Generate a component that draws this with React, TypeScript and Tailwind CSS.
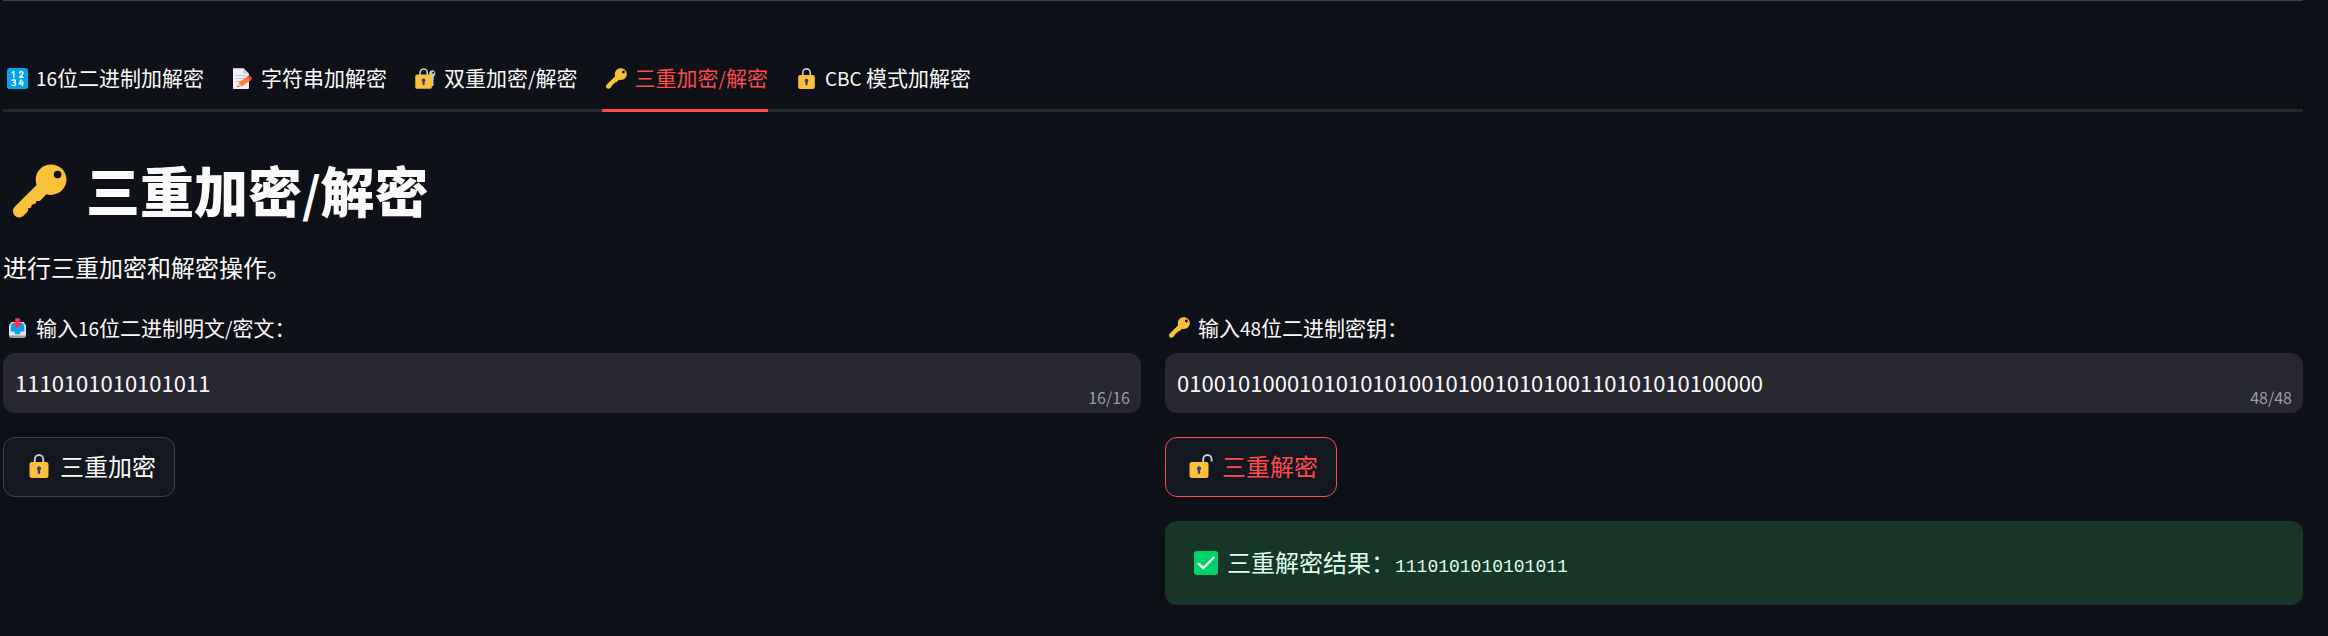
import type { ReactNode } from "react";

type IconProps = { className?: string };

function KeyIcon({ className }: IconProps) {
  return (
    <svg viewBox="0 0 54 54" className={className} aria-hidden="true">
      <path
        fill="#fac23c"
        d="M38 0.5c-8.6 0-15.3 6.800-15.300 15.300 0 1.900.3 3.700.9 5.300L2 42.500c-2.600 2.600-2.700 6.600-.4 9.100 2.400 2.500 6.400 2.500 8.900.1l3.700-3.700c1-1 1.100-2.300.7-3.500l2.100-.6c.8-.2 1.400-.8 1.500-1.600l.3-1.600 2.600-.6c1-.2 1.600-.9 1.800-1.800l.2-1.400h3.500l6.400-6.700c1.500.5 3.100.7 4.700.7 8.600 0 15.500-6.800 15.500-15.300S46.600.5 38 .5Zm6.600 6.200a3.800 3.800 0 1 1 0 7.600 3.800 3.800 0 0 1 0-7.600Z"
      />
    </svg>
  );
}

function LockIcon({ className }: IconProps) {
  return (
    <svg viewBox="0 0 24 24" className={className} aria-hidden="true">
      <path d="M7.800 9V5.200a4.200 4.200 0 0 1 8.400 0V9" fill="none" stroke="#c9c9cd" strokeWidth="1.900" />
      <rect x="2.500" y="8" width="19" height="16" rx="2.200" fill="#fac23c" />
      <path fill="#433b6b" d="M12 12.200a2.200 2.200 0 0 0-1.200 4v2.500a1.200 1.200 0 0 0 2.400 0v-2.500a2.200 2.200 0 0 0-1.200-4Z" />
    </svg>
  );
}

function OpenLockIcon({ className }: IconProps) {
  return (
    <svg viewBox="0 0 24 24" className={className} aria-hidden="true">
      <path d="M14.200 9V5.200a4 4 0 0 1 8.400 0v2.300" fill="none" stroke="#d0d0d4" strokeWidth="1.900" />
      <rect x="0.500" y="8" width="19" height="16" rx="2.200" fill="#fac23c" />
      <path fill="#433b6b" d="M10 12.200a2.200 2.200 0 0 0-1.200 4v2.500a1.200 1.200 0 0 0 2.400 0v-2.500a2.200 2.200 0 0 0-1.200-4Z" />
    </svg>
  );
}

function LockKeyIcon({ className }: IconProps) {
  return (
    <svg viewBox="0 0 24 24" className={className} aria-hidden="true">
      <path d="M5.800 9V5.200a4.100 4.100 0 0 1 8.200 0V9" fill="none" stroke="#c9c9cd" strokeWidth="1.900" />
      <path
        fill="#c4c4ca"
        fillRule="evenodd"
        d="M20 2.400a4.200 4.200 0 0 0-2 7.700v9.500l1.700 1.600 2-2-1.100-1.400 1.100-1.500-1.100-1.300.8-1.400V10A4.200 4.200 0 0 0 20 2.400Zm.8 1.800a1.100 1.100 0 1 1 0 2.300 1.100 1.100 0 0 1 0-2.300Z"
      />
      <rect x="0.300" y="7.500" width="19" height="16.300" rx="2.200" fill="#fac23c" />
      <path fill="#433b6b" d="M9.800 12a2.200 2.200 0 0 0-1.200 4v2.500a1.200 1.200 0 0 0 2.400 0V16a2.200 2.200 0 0 0-1.200-4Z" />
    </svg>
  );
}

function NumbersIcon({ className }: IconProps) {
  return (
    <svg viewBox="0 0 21 21" className={className} aria-hidden="true">
      <rect width="21" height="21" rx="2.500" fill="#00a6ed" />
      <g fill="none" stroke="#fff" strokeWidth="1.500" strokeLinecap="round" strokeLinejoin="round">
        <path d="M5.200 4.600 6.800 3.600v5.600" />
        <path d="M12.600 4.900c.2-1 .9-1.400 1.600-1.400 1.900 0 2.100 1.700 1.200 2.800l-2.700 2.900h3.300" />
        <path d="M5 12.300c1.600-1 3.200-.5 3.200.8 0 1-.8 1.400-1.700 1.400 1.100 0 2 .5 2 1.500 0 1.600-2.200 1.900-3.500 1" />
        <path d="m14 12-1.500 3.700h3.700M15.500 13.500v4.100" />
      </g>
    </svg>
  );
}

function MemoIcon({ className }: IconProps) {
  return (
    <svg viewBox="0 0 21 21" className={className} aria-hidden="true">
      <path fill="#f3eef8" d="M2.500.3h9l5.500 5.500V20a1 1 0 0 1-1 1H2a1 1 0 0 1-1-1V1.300a1 1 0 0 1 1.500-1Z" />
      <path fill="#cdc4d6" d="M11.500.3 17 5.800h-4.500a1 1 0 0 1-1-1Z" />
      <path stroke="#cdc4d6" strokeWidth="1" d="M3.500 7.500h10M3.500 10.500h9M3.500 13.500h5" />
      <path fill="#ffce7c" d="m6.800 14.500-1.300 4.600 4.900-.9Z" />
      <path fill="#ff822d" d="m6.500 14.700 8.700-6.300 3.400 3.800-8.700 6.200Z" />
      <path fill="#f92f60" d="m15 8.600 1.300-.9c1.700-1 4.700 2.300 3.400 3.700l-1.200.9Z" />
      <path fill="#402a32" d="m5.900 17.500-.5 1.700 1.700-.4Z" />
    </svg>
  );
}

function InboxIcon({ className }: IconProps) {
  return (
    <svg viewBox="0 0 21 21" className={className} aria-hidden="true">
      <path fill="#9b9b9b" d="M2 15h17v3.500a2.500 2.500 0 0 1-2.500 2.500h-12A2.500 2.500 0 0 1 2 18.500Z" />
      <path fill="#e1e4ea" d="M4.300 5h12.400L19 8.500v8.700a1.300 1.300 0 0 1-1.300 1.300H3.300A1.300 1.300 0 0 1 2 17.200V8.500Z" />
      <path fill="#00a6ed" d="M5 6.500h11l1.300 1.800v6.200h-3.500l-1.300 2.800h-4l-1.300-2.800H3.700V8.300Z" />
      <path fill="#f8315f" d="M8.200 1.200h4.600v4.500h3.300l-5.600 5.800-5.600-5.800h3.300Z" />
    </svg>
  );
}

function CheckIcon({ className }: IconProps) {
  return (
    <svg viewBox="0 0 24 24" className={className} aria-hidden="true">
      <rect width="24" height="24" rx="3" fill="#00d26a" />
      <path d="m4.500 12.700 4.700 4.500L19.500 6.800" fill="none" stroke="#fff" strokeWidth="2.300" strokeLinecap="round" strokeLinejoin="round" />
    </svg>
  );
}

/* Latin letters and digits, set slightly smaller than the Chinese around them. */
function Latin({ children }: { children: ReactNode }) {
  return <span className="text-[19px]">{children}</span>;
}

function SmallIcon({ children }: { children: ReactNode }) {
  return <span className="mr-1 flex w-[29px] shrink-0 justify-center">{children}</span>;
}

function LargeIcon({ children }: { children: ReactNode }) {
  return <span className="mr-[5px] flex w-[33px] shrink-0 justify-center">{children}</span>;
}

const tabs = [
  { id: "bin", icon: <NumbersIcon className="size-[21px]" />, label: <><Latin>16</Latin>位二进制加解密</> },
  { id: "str", icon: <MemoIcon className="size-[21px]" />, label: <>字符串加解密</> },
  { id: "double", icon: <LockKeyIcon className="size-[21px]" />, label: <>双重加密<Latin>/</Latin>解密</> },
  { id: "triple", icon: <KeyIcon className="size-[21px]" />, label: <>三重加密<Latin>/</Latin>解密</> },
  { id: "cbc", icon: <LockIcon className="size-[21px]" />, label: <><Latin>CBC </Latin>模式加解密</> },
];

function Field({ id, icon, label, value, max }: { id: string; icon: ReactNode; label: ReactNode; value: string; max: number }) {
  return (
    <div>
      <label htmlFor={id} className="mb-[10px] flex h-8 items-center text-[21px] leading-8">
        <SmallIcon>{icon}</SmallIcon>
        <span>{label}</span>
      </label>
      <div className="relative">
        <input
          id={id}
          type="text"
          defaultValue={value}
          maxLength={max}
          className="block h-[60px] w-full rounded-xl bg-[#262730] px-3 pb-0.5 text-[22px] text-[#fafafa] outline-none"
        />
        <span className="absolute right-[11px] bottom-0.5 text-base leading-7 text-[#9c9da1]">
          {value.length}/{max}
        </span>
      </div>
    </div>
  );
}

export default function App() {
  return (
    <main
      lang="zh-CN"
      className="min-h-screen bg-[#0e1117] pr-[25px] pl-[3px] font-['Noto_Sans_CJK_SC',sans-serif] text-[#fafafa]"
    >
      <hr className="border-t border-[#414348]" />

      <div role="tablist" className="mt-[46px] flex gap-6 border-b-[3px] border-[#27282d]">
        {tabs.map((tab) => {
          const active = tab.id === "triple";
          return (
            <button
              key={tab.id}
              type="button"
              role="tab"
              aria-selected={active}
              className={
                active
                  ? "-mb-[3px] flex h-[65px] items-center border-b-[3px] border-[#ff4b4b] text-[21px] whitespace-nowrap text-[#ff4b4b]"
                  : "flex h-[62px] items-center text-[21px] whitespace-nowrap"
              }
            >
              <SmallIcon>{tab.icon}</SmallIcon>
              <span>{tab.label}</span>
            </button>
          );
        })}
      </div>

      <h1 className="mt-[46px] flex items-center text-[54px] leading-[64px] font-black">
        <span className="mr-[9px] flex w-[74px] justify-center pt-0.5">
          <KeyIcon className="size-[54px]" />
        </span>
        <span>三重加密<span className="text-5xl font-bold">/</span>解密</span>
      </h1>

      <p className="mt-[27px] text-2xl leading-9">进行三重加密和解密操作。</p>

      <div className="mt-[26px] grid grid-cols-2 gap-6">
        <section className="flex flex-col items-start gap-6 *:first:w-full">
          <Field
            id="plain"
            icon={<InboxIcon className="size-[21px]" />}
            label={<>输入<Latin>16</Latin>位二进制明文<Latin>/</Latin>密文：</>}
            value="1110101010101011"
            max={16}
          />
          <button type="button" className="flex h-[60px] items-center rounded-xl border border-[#41434a] bg-[#131720] px-[18px] pb-0.5 text-2xl">
            <LargeIcon><LockIcon className="size-6" /></LargeIcon>
            三重加密
          </button>
        </section>

        <section className="flex flex-col items-start gap-6 *:first:w-full">
          <Field
            id="key"
            icon={<KeyIcon className="size-[21px]" />}
            label={<>输入<Latin>48</Latin>位二进制密钥：</>}
            value="010010100010101010100101001010100110101010100000"
            max={48}
          />
          <button type="button" className="flex h-[60px] items-center rounded-xl border border-[#ff4b4b] bg-[#131720] px-[18px] pb-0.5 text-2xl text-[#ff4b4b]">
            <LargeIcon><OpenLockIcon className="size-6" /></LargeIcon>
            三重解密
          </button>
          <div role="status" className="flex h-[84px] w-full items-center rounded-xl bg-[#183628] px-6 text-2xl text-[#dffde9]">
            <LargeIcon><CheckIcon className="size-6" /></LargeIcon>
            <p>
              三重解密结果：
              <code className="font-['Liberation_Mono',monospace] text-lg">1110101010101011</code>
            </p>
          </div>
        </section>
      </div>
    </main>
  );
}
